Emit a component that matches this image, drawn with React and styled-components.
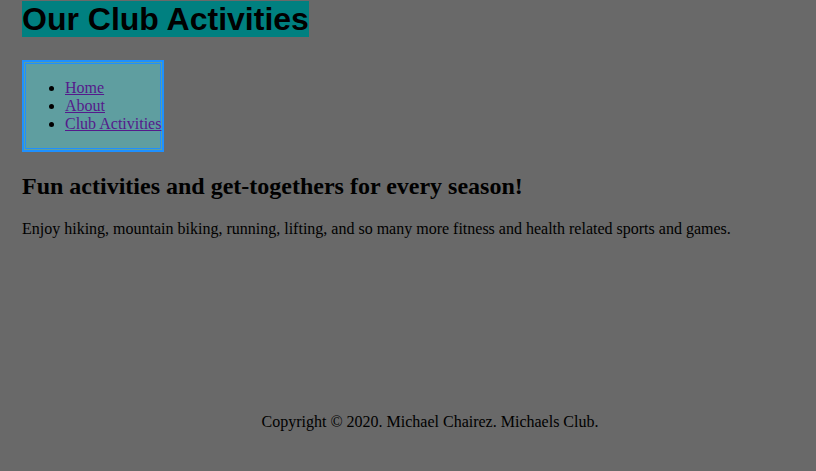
import React from 'react';
import styled, { createGlobalStyle } from 'styled-components';

const GlobalStyle = createGlobalStyle`
  html, body {
    margin: 0;
    padding: 0;
    background: #696969;
  }
  body {
    font-family: "Liberation Serif", "Times New Roman", serif;
    font-size: 16px;
    color: #000;
  }
`;

const Page = styled.div`
  padding: 1px 22px 0;
`;

const Header = styled.header`
  margin: 0;
`;

const Title = styled.h1`
  display: inline;
  margin: 0;
  font-family: "Liberation Sans", Arial, sans-serif;
  font-size: 32px;
  font-weight: bold;
  background: #008080;
  color: #000;
`;

/* 2px outer line, 1px gap, 1px inner line */
const Nav = styled.nav`
  box-sizing: border-box;
  width: 142px;
  margin-top: 22px;
  padding: 2px;
  background: #5f9ea0;
  border: 2px solid #1e90ff;
  box-shadow: inset 0 0 0 1px #5f9ea0, inset 0 0 0 2px #1e90ff;
`;

const NavList = styled.ul`
  margin: 15px 0;
  padding-left: 39px;
  padding-right: 0;
  white-space: nowrap;
`;

const NavLink = styled.a`
  color: #551a8b;
  text-decoration: underline;
`;

const Heading = styled.h2`
  font-size: 24px;
  font-weight: bold;
  margin: 21px 0 20px;
`;

const Text = styled.p`
  margin: 16px 0;
`;

const Footer = styled.footer`
  margin-top: 175px;
  padding-left: 44px;
  text-align: center;
`;

export default function App() {
  return (
    <Page>
      <GlobalStyle />
      <Header>
        <Title>Our Club Activities</Title>
      </Header>
      <Nav>
        <NavList>
          <li><NavLink href="#">Home</NavLink></li>
          <li><NavLink href="#">About</NavLink></li>
          <li><NavLink href="#">Club Activities</NavLink></li>
        </NavList>
      </Nav>
      <Heading>Fun activities and get-togethers for every season!</Heading>
      <Text>
        Enjoy hiking, mountain biking, running, lifting, and so many more fitness and health related sports and games.
      </Text>
      <Footer>Copyright © 2020. Michael Chairez. Michaels Club.</Footer>
    </Page>
  );
}
